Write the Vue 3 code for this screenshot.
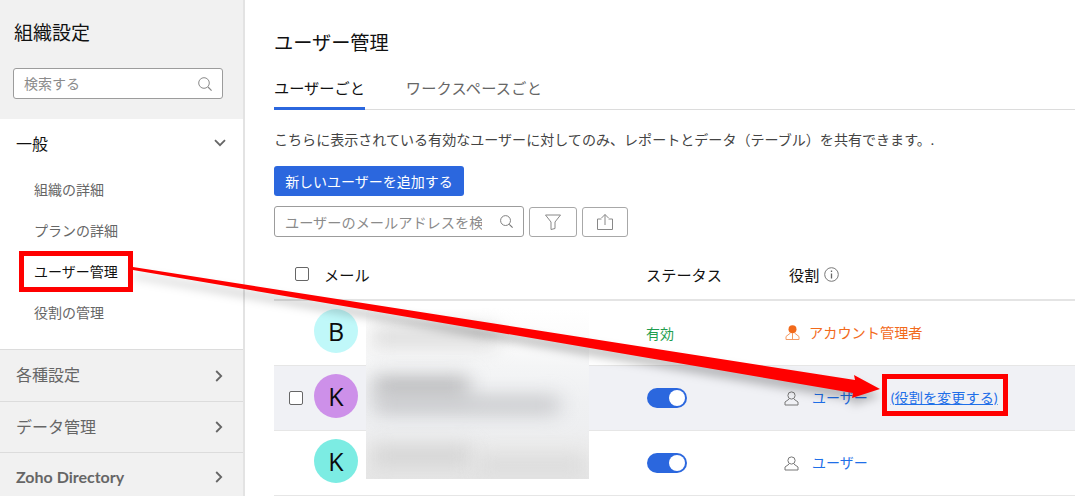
<template>
  <div class="page">
    <!-- Sidebar -->
    <aside class="sidebar">
      <h2 class="org-title">組織設定</h2>
      <div class="side-search">
        <span class="placeholder">検索する</span>
        <svg class="search-icon" width="16" height="16" viewBox="0 0 16 16" fill="none">
          <circle cx="7" cy="7" r="5.3" stroke="#8a8a8a" />
          <path d="M11 11l3.6 3.6" stroke="#8a8a8a" stroke-width="1.2" />
        </svg>
      </div>

      <section class="open-group">
        <div class="group-head">
          <span>一般</span>
          <svg width="12" height="8" viewBox="0 0 12 8" fill="none">
            <path d="M1 1.2l5 5 5-5" stroke="#666" stroke-width="1.8" />
          </svg>
        </div>
        <a
          v-for="item in subItems"
          :key="item"
          class="sub-item"
          :class="{ active: item === 'ユーザー管理' }"
        >
          {{ item }}
        </a>
      </section>

      <div
        v-for="group in closedGroups"
        :key="group.label"
        class="closed-group"
        :class="group.cls"
      >
        <span>{{ group.label }}</span>
        <svg width="8" height="12" viewBox="0 0 8 12" fill="none">
          <path d="M1.2 1l5 5-5 5" stroke="#666" stroke-width="1.8" />
        </svg>
      </div>
    </aside>

    <!-- Main -->
    <main class="content">
      <h1 class="page-title">ユーザー管理</h1>
      <nav class="tabs">
        <span class="tab selected">ユーザーごと</span>
        <span class="tab">ワークスペースごと</span>
      </nav>
      <p class="desc">
        こちらに表示されている有効なユーザーに対してのみ、レポートとデータ（テーブル）を共有できます。.
      </p>
      <button class="add-btn">新しいユーザーを追加する</button>

      <div class="tools">
        <div class="user-search">
          <span class="user-search-text">ユーザーのメールアドレスを検索</span>
          <svg width="15" height="15" viewBox="0 0 16 16" fill="none">
            <circle cx="7" cy="7" r="5.3" stroke="#777" />
            <path d="M11 11l3.6 3.6" stroke="#777" stroke-width="1.2" />
          </svg>
        </div>
        <button class="tool-btn filter">
          <svg width="18" height="18" viewBox="0 0 18 18" fill="none">
            <path d="M1.5 2h15l-5.5 7v6.5l-4 1V9z" stroke="#888" stroke-linejoin="round" />
          </svg>
        </button>
        <button class="tool-btn export">
          <svg width="18" height="18" viewBox="0 0 18 18" fill="none">
            <path d="M5.5 6H1.5v10.5h15V6h-4" stroke="#888" />
            <path d="M9 12V1.5M5.5 5L9 1.5 12.5 5" stroke="#888" />
          </svg>
        </button>
      </div>

      <div class="table-head">
        <span class="box head-box"></span>
        <span class="col-mail">メール</span>
        <span class="col-status">ステータス</span>
        <span class="col-role">
          役割
          <svg width="15" height="15" viewBox="0 0 15 15" fill="none">
            <circle cx="7.5" cy="7.5" r="6.8" stroke="#777" />
            <path d="M7.5 6.5v5M7.5 3.5v1.6" stroke="#666" stroke-width="1.3" />
          </svg>
        </span>
      </div>

      <div
        v-for="row in rows"
        :key="row.color"
        class="table-row"
        :class="{ hovered: row.hovered }"
      >
        <span class="box" :class="{ hidden: !row.hovered }"></span>
        <span class="avatar" :style="{ background: row.color }">{{ row.letter }}</span>
        <span class="mail-cell"></span>
        <span class="status-cell">
          <span v-if="row.admin" class="active-text">有効</span>
          <span v-else class="toggle"><i></i></span>
        </span>
        <span class="role-cell">
          <template v-if="row.admin">
            <svg class="admin-icon" width="15" height="15" viewBox="0 0 15 15">
              <circle cx="7.5" cy="4.3" r="4" fill="#f26a1b" />
              <path d="M5.5 8L1 11.5V14.5h13V11.5L9.5 8" fill="none" stroke="#f49a63" />
              <path d="M7.5 8v6.5" stroke="#f49a63" />
            </svg>
            <span class="admin-text">アカウント管理者</span>
          </template>
          <template v-else>
            <svg class="user-icon" width="15" height="15" viewBox="0 0 15 15" fill="none">
              <circle cx="7.5" cy="4.5" r="3.6" stroke="#777" />
              <path d="M5 8.2L1 11v3h13v-3L10 8.2" stroke="#777" />
            </svg>
            <span class="user-text">ユーザー</span>
            <a v-if="row.hovered" class="change-link">(役割を変更する)</a>
          </template>
        </span>
      </div>
    </main>

    <!-- Blurred mail addresses -->
    <div class="blur-patch">
      <i class="smear s1"></i>
      <i class="smear s2"></i>
      <i class="smear s3"></i>
      <i class="smear s4"></i>
      <i class="smear s5"></i>
    </div>

    <!-- Annotations drawn over the screenshot -->
    <div class="mark mark-left"></div>
    <div class="mark mark-right"></div>
    <svg class="arrow" width="1075" height="496" viewBox="0 0 1075 496">
      <polygon
        points="133,267 855,380 854,375 880,389 852,398 853,393 133,270"
        fill="#ff0000"
      />
    </svg>
  </div>
</template>

<script setup>
const subItems = ["組織の詳細", "プランの詳細", "ユーザー管理", "役割の管理"];

const closedGroups = [
  { label: "各種設定", cls: "h1" },
  { label: "データ管理", cls: "h2" },
  { label: "Zoho Directory", cls: "h3" },
];

const rows = [
  { letter: "B", color: "#c0f8f9", admin: true, hovered: false },
  { letter: "K", color: "#cd90e9", admin: false, hovered: true },
  { letter: "K", color: "#7cece3", admin: false, hovered: false },
];
</script>

<style>
html,
body {
  margin: 0;
  overflow: hidden;
  background: #fff;
}
</style>

<style scoped>
.page {
  position: relative;
  display: flex;
  width: 1075px;
  height: 496px;
  overflow: hidden;
  font-family: Lato, "Noto Sans CJK JP", sans-serif;
  color: #111;
}

/* sidebar */
.sidebar {
  width: 243px;
  height: 496px;
  flex-shrink: 0;
  background: #f1f1f1;
  border-right: 2px solid #e3e3e3;
}

.org-title {
  margin: 0;
  padding: 20px 0 0 14px;
  height: 48px;
  font-size: 19px;
  line-height: 26px;
  font-weight: 400;
  color: #111;
}

.side-search {
  display: flex;
  align-items: center;
  justify-content: space-between;
  box-sizing: border-box;
  width: 210px;
  height: 31px;
  margin-left: 13px;
  padding: 0 9px 0 10px;
  background: #fff;
  border: 1px solid #9c9c9c;
  border-radius: 3px;
}

.placeholder {
  margin-bottom: 2px;
  font-size: 14px;
  color: #8b8b8b;
}

.open-group {
  box-sizing: border-box;
  height: 230px;
  margin-top: 20px;
  background: #fff;
}

.group-head {
  display: flex;
  align-items: center;
  justify-content: space-between;
  height: 48px;
  padding: 0 17px 0 16px;
  font-size: 16px;
}

.sub-item {
  display: block;
  height: 41px;
  padding-left: 34px;
  font-size: 14px;
  line-height: 41px;
  color: #666;
}

.sub-item:first-of-type {
  margin-top: 2px;
}

.sub-item.active {
  color: #111;
}

.closed-group {
  display: flex;
  align-items: center;
  justify-content: space-between;
  box-sizing: border-box;
  padding: 0 20px 0 16px;
  border-top: 1px solid #dcdcdc;
  font-size: 16px;
  color: #666;
}

.closed-group.h1 {
  height: 52px;
}

.closed-group.h1 span {
  margin-bottom: 4px;
}

.closed-group.h2 {
  height: 51px;
}

.closed-group.h2 span {
  margin-bottom: 2px;
}

.closed-group.h3 {
  height: 44px;
  padding-top: 4px;
  font-size: 16px;
  font-weight: 700;
}

/* main */
.content {
  flex: 1;
  min-width: 0;
  padding: 30px 0 0 29px;
}

.page-title {
  margin: 0;
  height: 26px;
  font-size: 19.2px;
  line-height: 26px;
  font-weight: 400;
}

.tabs {
  display: flex;
  gap: 41px;
  height: 54px;
  box-sizing: border-box;
  padding-top: 21px;
  border-bottom: 1px solid #dcdcdc;
}

.tab {
  height: 32px;
  font-size: 15.2px;
  letter-spacing: 0.2px;
  line-height: 22px;
  color: #666;
}

.tab.selected {
  color: #111;
  border-bottom: 3px solid #2b67de;
  height: 30px;
  letter-spacing: 0;
}

.desc {
  margin: 0;
  padding-top: 20px;
  height: 56px;
  box-sizing: border-box;
  font-size: 14.05px;
  line-height: 20px;
  color: #444;
  white-space: nowrap;
}

.add-btn {
  display: block;
  width: 190px;
  height: 30px;
  padding: 0;
  border: none;
  border-radius: 3px;
  background: #2b67de;
  color: #fff;
  font-family: inherit;
  font-size: 14px;
}

.tools {
  display: flex;
  align-items: flex-start;
  gap: 5px;
  margin-top: 10px;
}

.user-search {
  display: flex;
  align-items: center;
  box-sizing: border-box;
  width: 250px;
  height: 31px;
  padding: 0 9px 0 10px;
  border: 1px solid #9c9c9c;
  border-radius: 3px;
}

.user-search-text {
  width: 198px;
  margin-right: 17px;
  overflow: hidden;
  white-space: nowrap;
  font-size: 14.2px;
  color: #8b8b8b;
}

.tool-btn {
  display: flex;
  align-items: center;
  justify-content: center;
  box-sizing: border-box;
  height: 30px;
  margin-top: 1px;
  padding: 0;
  background: #fff;
  border: 1px solid #a8a8a8;
  border-radius: 3px;
}

.tool-btn.filter {
  width: 48px;
}

.tool-btn.export {
  width: 46px;
}

.table-head {
  display: flex;
  align-items: center;
  box-sizing: border-box;
  height: 64px;
  padding: 12px 0 0 21px;
  border-bottom: 2px solid #e4e4e4;
  font-size: 15.2px;
  color: #111;
}

.box {
  flex-shrink: 0;
  box-sizing: border-box;
  width: 14px;
  height: 14px;
  background: #fff;
  border: 1px solid #666;
  border-radius: 2px;
}

.box.hidden {
  visibility: hidden;
}

.col-mail {
  width: 322px;
  margin-left: 15px;
}

.col-status {
  width: 143px;
}

.col-role {
  display: flex;
  align-items: center;
  gap: 5px;
}

.table-row {
  display: flex;
  align-items: center;
  box-sizing: border-box;
  height: 65px;
  padding-left: 15px;
  border-bottom: 1px solid #e6e6e6;
  font-size: 14px;
}

.table-row.hovered {
  background: #f0f1f5;
}

.avatar {
  flex-shrink: 0;
  width: 44px;
  height: 44px;
  margin-left: 11px;
  margin-top: -4px;
  border-radius: 50%;
  font-family: "Open Sans", sans-serif;
  font-size: 25px;
  line-height: 44px;
  text-align: center;
  color: #0b0b0b;
}

.mail-cell {
  width: 288px;
}

.status-cell {
  width: 138px;
}

.active-text {
  display: block;
  margin-bottom: 1px;
  color: #1f9e4f;
}

.toggle {
  position: relative;
  display: block;
  width: 40px;
  height: 20px;
  margin-left: 1px;
  border-radius: 10px;
  background: #2b67de;
}

.toggle i {
  position: absolute;
  top: 2px;
  right: 2px;
  width: 16px;
  height: 16px;
  border-radius: 50%;
  background: #fff;
}

.role-cell {
  display: flex;
  align-items: center;
  white-space: nowrap;
}

.admin-text {
  margin-left: 9px;
  margin-bottom: 2px;
  font-size: 14.2px;
  color: #f26a1b;
}

.admin-icon {
  margin-left: 1px;
  margin-bottom: 2px;
}

.user-text {
  margin-left: 13px;
  margin-bottom: 2px;
  color: #1f6fe8;
}

.change-link {
  margin-left: 23px;
  margin-bottom: 3px;
  font-size: 14.2px;
  color: #1f6fe8;
  text-decoration: underline;
}

/* blur patch over the mail cell */
.blur-patch {
  position: absolute;
  left: 366px;
  top: 308px;
  width: 223px;
  height: 171px;
  overflow: hidden;
  background: linear-gradient(
    to bottom,
    #ffffff 0%,
    #fbfbfb 20%,
    #f4f5f6 34%,
    #eff0f2 55%,
    #eeeff1 68%,
    #ececec 84%,
    #e6e6e6 100%
  );
}

.smear {
  position: absolute;
  display: block;
  filter: blur(10px);
}

.s1 {
  left: 6px;
  top: 20px;
  width: 125px;
  height: 18px;
  background: #d6d6d6;
}

.s2 {
  left: 8px;
  top: 70px;
  width: 95px;
  height: 16px;
  background: #acacae;
}

.s3 {
  left: 8px;
  top: 90px;
  width: 185px;
  height: 14px;
  background: #bcbdc0;
}

.s4 {
  left: 6px;
  top: 138px;
  width: 100px;
  height: 20px;
  background: #d2d2d2;
}

.s5 {
  left: 110px;
  top: 146px;
  width: 110px;
  height: 22px;
  background: #dcdcdc;
}

/* red call-outs */
.mark {
  position: absolute;
  box-sizing: border-box;
  border: 5px solid #ff0000;
}

.mark-left {
  left: 19px;
  top: 251px;
  width: 114px;
  height: 41px;
}

.mark-right {
  left: 882px;
  top: 374px;
  width: 126px;
  height: 42px;
}

.arrow {
  position: absolute;
  left: 0;
  top: 0;
  filter: drop-shadow(0 7px 5px rgba(0, 0, 0, 0.25));
}
</style>
